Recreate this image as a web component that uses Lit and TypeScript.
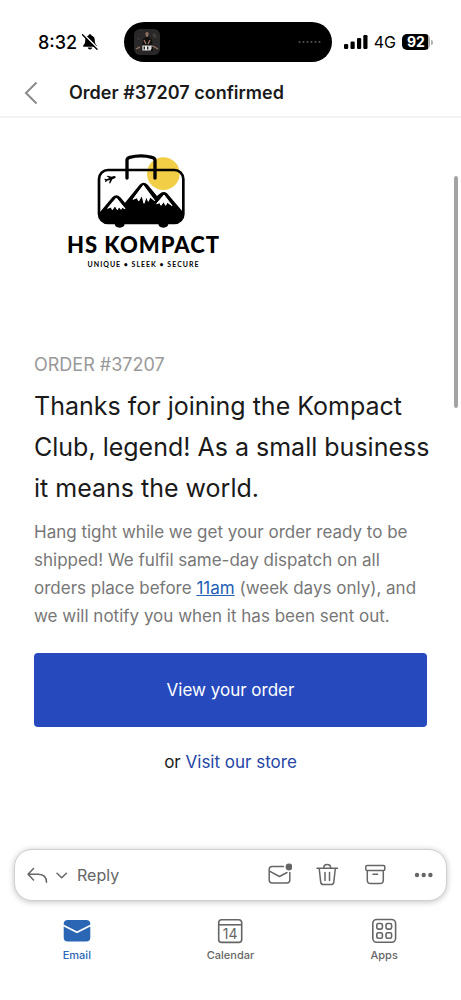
import { LitElement, html, svg, css } from "lit";
import { customElement } from "lit/decorators.js";

@customElement("status-bar")
class StatusBar extends LitElement {
  static styles = css`
    :host {
      display: flex;
      align-items: center;
      height: 40px;
      padding: 22px 28px 6px 38px;
      color: #000;
    }
    svg {
      display: block;
      flex: none;
    }
    .clock {
      display: flex;
      align-items: center;
      gap: 4px;
      flex: 6 1 0;
      font-size: 18px;
      font-weight: 500;
    }
    .island {
      display: flex;
      align-items: center;
      justify-content: space-between;
      box-sizing: border-box;
      width: 208px;
      height: 40px;
      padding: 0 10px;
      border-radius: 20px;
      background: #000;
    }
    .signal {
      display: flex;
      align-items: center;
      justify-content: flex-end;
      flex: 7 1 0;
      gap: 6px;
      font-size: 16px;
    }
    .battery {
      display: flex;
      align-items: center;
      gap: 1px;
    }
    .level {
      width: 28px;
      border-radius: 5px;
      background: linear-gradient(90deg, #000 92%, #aaa 92%);
      color: #fff;
      font-size: 14px;
      font-weight: 700;
      line-height: 16px;
      text-align: center;
    }
    .cap {
      width: 2px;
      height: 5px;
      border-radius: 0 2px 2px 0;
      background: #b0b0b0;
    }
  `;

  render() {
    return html`
      <div class="clock">
        <span>8:32</span>
        <svg width="18" height="18" viewBox="0 0 18 18" aria-hidden="true">
          <path d="M9 1.2c.9 0 1.500.6 1.500 1.400 2.200.7 3.300 2.400 3.300 4.600 0 3 .7 4 2 5.300v1.300H2.200v-1.300c1.300-1.300 2-2.300 2-5.300 0-2.200 1.100-3.900 3.300-4.600 0-.8.6-1.400 1.500-1.400zM6.800 14.500h4.400c-.2 1.300-1.100 2-2.200 2s-2-.7-2.200-2z" />
          <path d="M2.500 1.200L17 15.700" stroke="#fff" stroke-width="1.800" />
          <path d="M1.500 1.800L16 16.300" stroke="#000" stroke-width="1.400" stroke-linecap="round" />
        </svg>
      </div>
      <div class="island">
        <svg width="26" height="26" viewBox="0 0 26 26" aria-hidden="true">
          <rect width="26" height="26" rx="6" fill="#292727" />
          <path d="M3 10l2-2 1 3zM18 5l3-1 2 4-3 1zM3 16l3 3-2 2z" fill="#403a38" />
          <path d="M9 10l3-2h3l3 3 1 11H8z" fill="#12100f" />
          <path d="M11.500 4c.6-1.500 2.700-1.500 3 .3.200 2-.4 3.700-1.500 3.700s-1.800-2-1.500-4z" fill="#8d6f62" />
          <path d="M2 20l4-2M24 20l-5-3M10 11l2 4M16 11l-2 4" stroke="#9a7567" stroke-width="1.300" />
          <path d="M9 17h2.500v4H9zM12.500 17H15v4h-2.500zM16 17h2.500M16.300 17v4.500M16 19h2" fill="none" stroke="#eee" stroke-width="1.200" />
        </svg>
        <svg width="24" height="4" viewBox="0 0 24 4" fill="#555" aria-hidden="true">
          ${[1, 5, 9, 13, 17, 21].map((x) => svg`<circle cx=${x + 0.5} cy="2" r="1" />`)}
        </svg>
      </div>
      <div class="signal">
        <svg width="24" height="16" viewBox="0 0 24 16" aria-hidden="true">
          <rect x="0" y="10" width="4.200" height="5" rx="1.200" />
          <rect x="6.500" y="7.500" width="4.200" height="7.500" rx="1.200" />
          <rect x="13" y="4" width="4.200" height="11" rx="1.200" />
          <rect x="19.300" y="1" width="4.200" height="14" rx="1.200" />
        </svg>
        <span>4G</span>
        <span class="battery"><span class="level">92</span><span class="cap"></span></span>
      </div>
    `;
  }
}

@customElement("brand-logo")
class BrandLogo extends LitElement {
  static styles = css`
    :host {
      display: inline-flex;
      flex-direction: column;
      align-items: center;
      color: #000;
    }
    .name {
      margin-top: 4px;
      font-family: Lato, sans-serif;
      font-size: 22px;
      font-weight: 900;
      line-height: 24px;
      letter-spacing: 1px;
    }
    .tagline {
      margin-top: 1px;
      font-family: Lato, sans-serif;
      font-size: 7px;
      font-weight: 700;
      line-height: 12px;
      letter-spacing: 1px;
    }
  `;

  render() {
    return html`
      <svg width="94" height="77" viewBox="110 22 282 231" aria-hidden="true">
        <circle cx="309" cy="87" r="49" fill="#f2cd46" />
        <path d="M116 206l40-48q12-12 24 0l14 16 44-54q12-12 24 0l28 34 10-8q10-8 20 0l50 58q0 32-30 32H144q-28 0-28-30z" />
        <path d="M168 160l-26 31 10-4 4 8 8-12 7 12 5-9 6 8 3-6 9 4zM249 122l-31 42 12-5 5 10 10-17 6 24 7-20 6 14 5-13 14 11zM311 151l-22 26 9-3 4 8 8-11 6 11 5-9 14 10z" fill="#fff" stroke="#fff" stroke-width="3" stroke-linejoin="round" />
        <rect x="116" y="76" width="253" height="159" rx="27" fill="none" stroke="#000" stroke-width="8" />
        <path d="M200 100V47q0-7 8-9 34-9 67 0 9 2 9 9v53" fill="none" stroke="#000" stroke-width="10" stroke-linecap="round" />
        <path d="M163 236h30q0 13-15 13t-15-13zM294 236h30q0 13-15 13t-15-13z" />
        <path d="M166 96c2 2-3 5-10 8l-6 12-4 0 3-10-9 2-3 4-3-1 1-5-4-3 3-1 5 2 8-4-8-5 3-2 12 3c6-2 10-3 12 0z" />
      </svg>
      <span class="name">HS KOMPACT</span>
      <span class="tagline">UNIQUE • SLEEK • SECURE</span>
    `;
  }
}

@customElement("reply-bar")
class ReplyBar extends LitElement {
  static styles = css`
    :host {
      display: flex;
      align-items: center;
      justify-content: space-between;
      height: 50px;
      margin: 0 14px;
      padding: 0 10px;
      border: 1px solid #cfcfcf;
      border-radius: 18px;
      background: #fff;
      box-shadow: 0 1px 6px rgba(0, 0, 0, 0.24);
      color: #666;
    }
    .group {
      display: flex;
      align-items: center;
    }
    .actions {
      gap: 24px;
    }
    button {
      display: flex;
      align-items: center;
      padding: 0;
      border: 0;
      background: none;
      color: inherit;
      font: inherit;
      font-size: 16px;
    }
    .reply {
      padding-left: 4px;
    }
    svg {
      display: block;
      fill: none;
      stroke: currentColor;
      stroke-width: 1.5;
      stroke-linecap: round;
      stroke-linejoin: round;
    }
    .solid {
      fill: currentColor;
      stroke: none;
    }
  `;

  render() {
    return html`
      <div class="group">
        <button aria-label="Reply to sender">
          <svg width="24" height="24" viewBox="0 0 24 24"><path d="M8.500 5.500L3 11.200l5.500 5.700M3 11.200h10.500q8 .3 8 8" /></svg>
        </button>
        <button aria-label="Reply options">
          <svg width="24" height="24" viewBox="0 0 24 24"><path d="M8 10.300l4.700 4.500 4.700-4.500" /></svg>
        </button>
        <button class="reply">Reply</button>
      </div>
      <div class="group actions">
        <button aria-label="Mark as unread">
          <svg width="24" height="24" viewBox="0 0 24 24">
            <path d="M15.500 3.500H4Q1.200 3.500 1.200 6.300V17q0 3 3 3h14.600q3 0 3-3V9.500M1.500 8.200l10 5.300 7.500-4" />
            <circle class="solid" cx="21" cy="4" r="3.400" />
          </svg>
        </button>
        <button aria-label="Delete">
          <svg width="24" height="24" viewBox="0 0 24 24">
            <path d="M1 5.200h20.500M7.700 5q0-3.500 3.500-3.500T14.700 5M3.200 5.500l1.500 13.600q.3 2.500 2.800 2.500h7.500q2.500 0 2.800-2.500l1.500-13.600M9 9.500v8M13.500 9.500v8" />
          </svg>
        </button>
        <button aria-label="Archive">
          <svg width="24" height="24" viewBox="0 0 24 24">
            <rect x="1.800" y="2.500" width="19" height="5" rx="1.300" />
            <path d="M3.300 7.700v9.500q0 3.300 3.300 3.300h9.400q3.300 0 3.300-3.300V7.700M9 11.300h4.600" />
          </svg>
        </button>
        <button aria-label="More actions">
          <svg width="24" height="24" viewBox="0 0 24 24">
            <circle class="solid" cx="5" cy="12" r="2.200" />
            <circle class="solid" cx="11.700" cy="12" r="2.200" />
            <circle class="solid" cx="18.400" cy="12" r="2.200" />
          </svg>
        </button>
      </div>
    `;
  }
}

@customElement("tab-bar")
class TabBar extends LitElement {
  static styles = css`
    :host {
      display: block;
    }
    nav {
      display: grid;
      grid-template-columns: repeat(3, 1fr);
      padding: 15px 0 37px;
    }
    a {
      display: flex;
      flex-direction: column;
      align-items: center;
      gap: 1px;
      color: #666;
      font-size: 11px;
      font-weight: 500;
      line-height: 16px;
      text-decoration: none;
    }
    .active {
      color: #2b66b5;
    }
    svg {
      display: block;
      fill: none;
      stroke: currentColor;
      stroke-width: 1.6;
    }
    .solid {
      fill: currentColor;
      stroke: none;
    }
    .date {
      fill: currentColor;
      stroke: none;
      font-size: 14px;
      font-weight: 400;
      text-anchor: middle;
    }
  `;

  render() {
    return html`
      <nav>
        <a class="active" href="#email" aria-current="page">
          <svg width="30" height="30" viewBox="0 0 30 30">
            <rect class="solid" x="1.700" y="4" width="26.600" height="21.500" rx="4" />
            <path d="M1 9.200l14 7 14-7" stroke="#fff" stroke-width="1.800" />
          </svg>
          Email
        </a>
        <a href="#calendar">
          <svg width="30" height="30" viewBox="0 0 30 30">
            <rect x="3.700" y="3.800" width="23" height="22.600" rx="3" />
            <path d="M3.700 8.800h23" />
            <text class="date" x="15.200" y="22.600">14</text>
          </svg>
          Calendar
        </a>
        <a href="#apps">
          <svg width="30" height="30" viewBox="0 0 30 30">
            <rect x="3.800" y="3.500" width="22.800" height="22.800" rx="4" />
            <rect x="7.800" y="7.500" width="5.600" height="5.600" rx="1.500" />
            <rect x="17" y="7.500" width="5.600" height="5.600" rx="1.500" />
            <rect x="7.800" y="16.700" width="5.600" height="5.600" rx="1.500" />
            <rect x="17" y="16.700" width="5.600" height="5.600" rx="1.500" />
          </svg>
          Apps
        </a>
      </nav>
    `;
  }
}

@customElement("app-root")
class AppRoot extends LitElement {
  static styles = css`
    :host {
      display: flex;
      flex-direction: column;
      min-height: 100vh;
      background: #fff;
      color: #1a1a1a;
      font-family: Inter, sans-serif;
    }
    header {
      display: flex;
      align-items: center;
      gap: 29px;
      height: 46px;
      padding: 2px 0 0 22px;
      border-bottom: 2px solid #f2f2f2;
    }
    .back {
      padding: 0;
      border: 0;
      background: none;
      color: #8a8a8a;
    }
    .back svg {
      display: block;
    }
    .subject {
      margin: 0;
      font-size: 18px;
      font-weight: 600;
      line-height: 24px;
    }
    main {
      position: relative;
      flex: 1;
      padding: 34px 34px 0;
    }
    .thumb {
      position: absolute;
      top: 58px;
      right: 3px;
      width: 4px;
      height: 232px;
      border-radius: 2px;
      background: #a3a3a3;
    }
    .logo {
      display: flex;
      padding-left: 33px;
    }
    .order {
      margin: 83px 0 0;
      color: #999;
      font-size: 18px;
      line-height: 24px;
    }
    h2 {
      margin: 9px -12px 0 0;
      font-size: 25px;
      font-weight: 400;
      line-height: 41px;
    }
    .message {
      margin: 9px 0 0;
      color: #777;
      font-size: 17px;
      line-height: 28px;
    }
    .message a {
      color: #2160b4;
    }
    .primary {
      display: block;
      width: 100%;
      height: 74px;
      margin-top: 23px;
      border: 0;
      border-radius: 4px;
      background: #264abd;
      color: #fff;
      font: inherit;
      font-size: 17px;
    }
    .store {
      margin: 21px 0;
      font-size: 17px;
      line-height: 28px;
      text-align: center;
    }
    .store a {
      color: #2446a6;
      text-decoration: none;
    }
  `;

  render() {
    return html`
      <status-bar></status-bar>
      <header>
        <button class="back" aria-label="Back">
          <svg width="18" height="24" viewBox="0 0 18 24" fill="none" stroke="currentColor" stroke-width="2">
            <path d="M14.500 1.500L4 12l10.500 10.500" />
          </svg>
        </button>
        <h1 class="subject">Order #37207 confirmed</h1>
      </header>
      <main>
        <div class="thumb"></div>
        <div class="logo"><brand-logo></brand-logo></div>
        <p class="order">ORDER #37207</p>
        <h2>Thanks for joining the Kompact Club, legend! As a small business it means the world.</h2>
        <p class="message">
          Hang tight while we get your order ready to be shipped! We fulfil same-day dispatch on all
          orders place before <a href="#time">11am</a> (week days only), and we will notify you when
          it has been sent out.
        </p>
        <button class="primary">View your order</button>
        <p class="store">or <a href="#store">Visit our store</a></p>
      </main>
      <reply-bar></reply-bar>
      <tab-bar></tab-bar>
    `;
  }
}
